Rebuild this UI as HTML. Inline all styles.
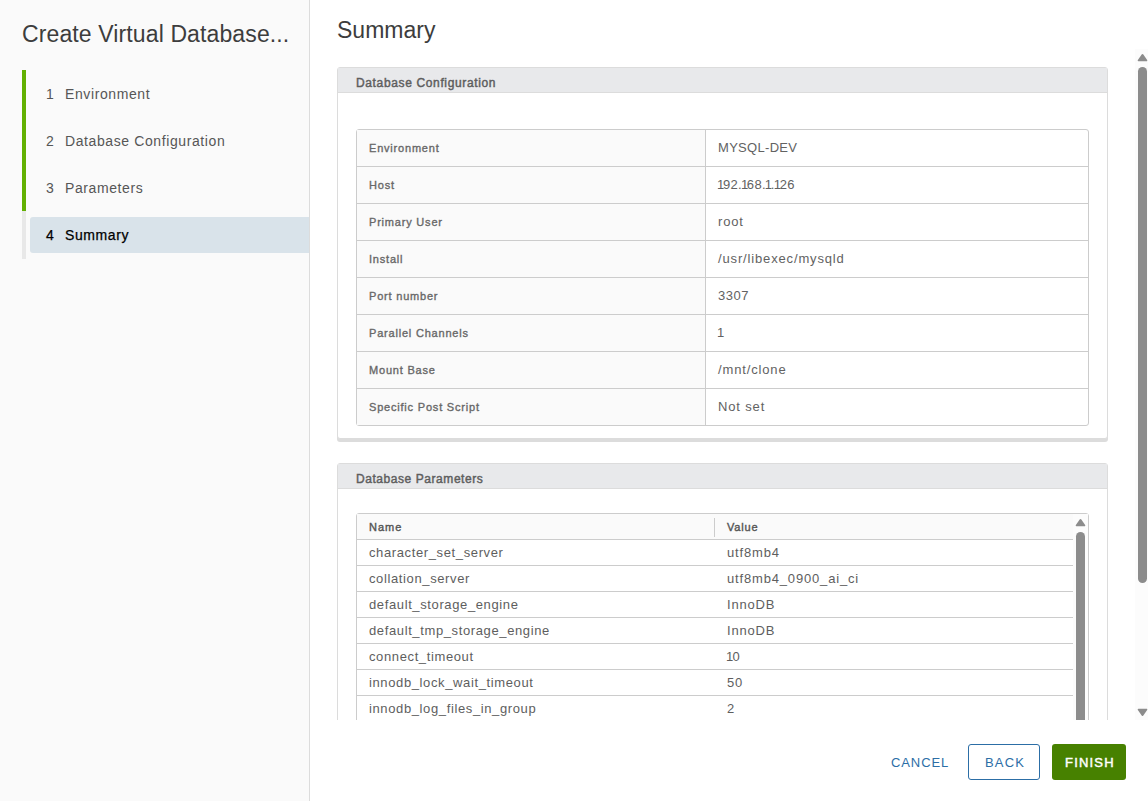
<!DOCTYPE html>
<html><head><meta charset="utf-8">
<style>
*{box-sizing:border-box;}
html,body{margin:0;padding:0;width:1148px;height:801px;overflow:hidden;background:#fff;font-family:"Liberation Sans",sans-serif;}
.abs{position:absolute;}
#side{position:absolute;left:0;top:0;width:310px;height:801px;background:#fafafa;border-right:1px solid #dcdcdc;}
#title{position:absolute;left:22px;top:18.5px;letter-spacing:0.12px;font-size:23px;color:#3d3d3d;white-space:nowrap;line-height:30px;}
.bar{position:absolute;left:22px;width:4px;}
.step{position:absolute;left:30px;width:279px;height:36px;font-size:14px;color:#565656;line-height:36px;letter-spacing:0.6px;white-space:nowrap;}
.step .n{position:absolute;left:16px;}
.step .t{position:absolute;left:35px;}
.step.act{background:#d9e3ea;border-radius:3px 0 0 3px;color:#000;-webkit-text-stroke:0.25px #000;}
#sumtitle{position:absolute;left:337px;top:15px;font-size:23px;color:#3d3d3d;line-height:30px;white-space:nowrap;}
.card{position:absolute;left:337px;width:771px;border:1px solid #dcdcdc;border-radius:3px;background:#fff;box-shadow:0 3px 0 0 #dcdcdc;}
.card .hd{height:25px;background:#e8e9eb;border-bottom:1px solid #dcdcdc;font-size:12px;font-weight:normal;-webkit-text-stroke:0.45px #5e5e5e;color:#5e5e5e;line-height:30px;padding-left:18px;letter-spacing:0.64px;}
table.kv{position:absolute;left:18px;border-collapse:separate;border-spacing:0;border:1px solid #cccccc;border-radius:3px;width:733px;}
table.kv td{height:37px;border-top:1px solid #cccccc;padding:0;font-size:13px;color:#626262;white-space:nowrap;}
table.kv tr:first-child td{border-top:none;height:36px;}
table.kv td.k{width:349px;background:#fafafa;border-right:1px solid #cccccc;font-size:11px;font-weight:normal;-webkit-text-stroke:0.35px #686868;padding-left:12px;letter-spacing:0.8px;color:#686868;}
table.kv td.v{padding-left:12px;padding-bottom:2px;letter-spacing:0.85px;}

#main{position:absolute;left:310px;top:49px;width:838px;height:671px;overflow:hidden;}
.dg{position:absolute;left:18px;top:49px;width:733px;height:300px;border:1px solid #cccccc;border-radius:3px;background:#fff;}
.dg .row{position:absolute;left:0;width:716px;height:26px;border-bottom:1px solid #cccccc;font-size:13px;color:#5e5e5e;letter-spacing:0.62px;white-space:nowrap;line-height:25px;}
.dg .row span{position:absolute;}
.dg .row .c1{left:12px;}
.dg .row .c2{left:370px;letter-spacing:0.83px;}
i.o{font-style:normal;margin-left:-1px;margin-right:-1.6px;}
.dg .hrow{background:#fafafa;font-size:11px;font-weight:normal;-webkit-text-stroke:0.4px #555;letter-spacing:1.0px;line-height:27px;color:#555;}
.dg .sep{position:absolute;left:357px;top:4px;width:1px;height:19px;background:#cccccc;}
.sb{position:absolute;background:#fcfcfc;}
.thumb{position:absolute;background:#8c8c8c;border-radius:5px;}
.arr{position:absolute;}
.btn{position:absolute;top:744px;height:36px;border-radius:3px;font-size:13px;line-height:37px;text-align:center;white-space:nowrap;}
</style></head>
<body>
<div id="side">
  <div id="title">Create Virtual Database...</div>
  <div class="bar" style="top:70px;height:141px;background:#62b002;"></div>
  <div class="bar" style="top:211px;height:48px;background:#e8e8e8;"></div>
  <div class="step" style="top:76px;"><span class="n">1</span><span class="t">Environment</span></div>
  <div class="step" style="top:123px;"><span class="n">2</span><span class="t">Database Configuration</span></div>
  <div class="step" style="top:170px;"><span class="n">3</span><span class="t">Parameters</span></div>
  <div class="step act" style="top:217px;"><span class="n">4</span><span class="t">Summary</span></div>
</div>

<div id="sumtitle">Summary</div>

<div class="card" style="top:67px;height:372px;">
  <div class="hd">Database Configuration</div>
  <table class="kv" style="top:61px;">
    <tr><td class="k">Environment</td><td class="v" style="letter-spacing:0.3px">MYSQL-DEV</td></tr>
    <tr><td class="k">Host</td><td class="v" style="letter-spacing:0.3px"><i class="o">1</i>92.<i class="o">1</i>68.<i class="o">1</i>.<i class="o">1</i>26</td></tr>
    <tr><td class="k">Primary User</td><td class="v">root</td></tr>
    <tr><td class="k">Install</td><td class="v">/usr/libexec/mysqld</td></tr>
    <tr><td class="k">Port number</td><td class="v" style="letter-spacing:0.5px">3307</td></tr>
    <tr><td class="k">Parallel Channels</td><td class="v"><i class="o">1</i></td></tr>
    <tr><td class="k">Mount Base</td><td class="v">/mnt/clone</td></tr>
    <tr><td class="k">Specific Post Script</td><td class="v">Not set</td></tr>
  </table>
</div>


<div id="main">
  <div class="card" style="left:27px;top:414px;height:400px;">
    <div class="hd" style="letter-spacing:0.56px">Database Parameters</div>
    <div class="dg">
      <div class="row hrow" style="top:0;"><span class="c1">Name</span><div class="sep"></div><span class="c2">Value</span></div>
      <div class="row" style="top:26px;"><span class="c1">character_set_server</span><span class="c2">utf8mb4</span></div>
      <div class="row" style="top:52px;"><span class="c1">collation_server</span><span class="c2">utf8mb4_0900_ai_ci</span></div>
      <div class="row" style="top:78px;"><span class="c1">default_storage_engine</span><span class="c2">InnoDB</span></div>
      <div class="row" style="top:104px;"><span class="c1">default_tmp_storage_engine</span><span class="c2">InnoDB</span></div>
      <div class="row" style="top:130px;"><span class="c1">connect_timeout</span><span class="c2"><i class="o">1</i>0</span></div>
      <div class="row" style="top:156px;"><span class="c1">innodb_lock_wait_timeout</span><span class="c2">50</span></div>
      <div class="row" style="top:182px;"><span class="c1">innodb_log_files_in_group</span><span class="c2">2</span></div>
      <div class="sb" style="left:716px;top:0;width:15px;height:300px;">
        <svg class="arr" width="11" height="9" viewBox="0 0 11 9" style="left:2px;top:4px;"><polygon points="1.5,7.5 5.5,1.8 9.5,7.5" fill="#8c8c8c" stroke="#8c8c8c" stroke-width="1.6" stroke-linejoin="round"/></svg>
        <div class="thumb" style="left:3px;top:18px;width:9px;height:280px;"></div>
      </div>
    </div>
  </div>
  <div class="sb" style="left:825px;top:0;width:13px;height:671px;">
    <svg class="arr" width="11" height="9" viewBox="0 0 11 9" style="left:2px;top:4px;"><polygon points="1.5,7.5 5.5,1.8 9.5,7.5" fill="#8c8c8c" stroke="#8c8c8c" stroke-width="1.6" stroke-linejoin="round"/></svg>
    <div class="thumb" style="left:3px;top:18px;width:9px;height:516px;"></div>
    <svg class="arr" width="11" height="9" viewBox="0 0 11 9" style="left:2px;top:659px;"><polygon points="1.5,1.5 5.5,7.2 9.5,1.5" fill="#8c8c8c" stroke="#8c8c8c" stroke-width="1.6" stroke-linejoin="round"/></svg>
  </div>
</div>
<div class="btn" style="left:880px;width:80px;padding-left:11px;text-align:left;color:#2c6ea6;letter-spacing:0.9px;">CANCEL</div>
<div class="btn" style="left:968px;width:72px;padding-left:16px;text-align:left;border:1px solid #2c6ea6;color:#2c6ea6;letter-spacing:1.2px;line-height:35px;">BACK</div>
<div class="btn" style="left:1052px;width:74px;padding-left:13px;text-align:left;background:#478100;color:#fff;font-weight:normal;-webkit-text-stroke:0.45px #fff;letter-spacing:1.2px;">FINISH</div>
</body></html>
